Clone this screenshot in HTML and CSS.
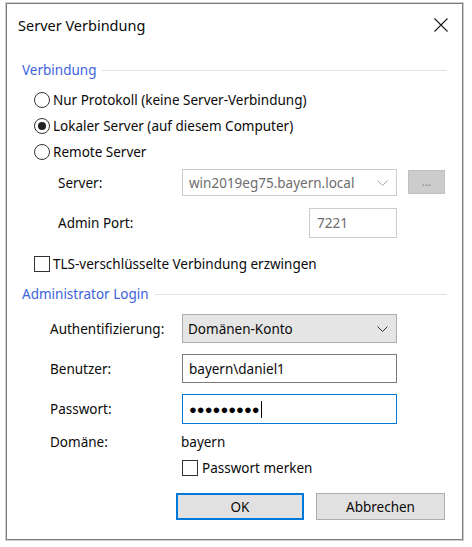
FILE: index.html
```html
<!DOCTYPE html>
<html lang="de">
<head>
<meta charset="utf-8">
<title>Server Verbindung</title>
<link rel="stylesheet" href="styles.css">
</head>
<body>
<div class="window">
  <div class="titlebar">
    <span class="title">Server Verbindung</span>
    <svg class="close" width="14" height="14" viewBox="0 0 14 14"><path d="M0.5 0.5 L13.5 13.5 M13.5 0.5 L0.5 13.5" stroke="#1a1a1a" stroke-width="1.1" fill="none"/></svg>
  </div>

  <div class="group-hdr hdr1"><span>Verbindung</span><span class="line"></span></div>

  <div class="radio-row r1"><span class="radio"></span><span>Nur Protokoll (keine Server-Verbindung)</span></div>
  <div class="radio-row"><span class="radio checked"></span><span>Lokaler Server (auf diesem Computer)</span></div>
  <div class="radio-row"><span class="radio"></span><span>Remote Server</span></div>

  <div class="field-row server-row">
    <span class="label wide">Server:</span>
    <div class="combo disabled"><span>win2019eg75.bayern.local</span><svg class="chev" width="11" height="6" viewBox="0 0 11 6"><path d="M0.5 0.5 L5.5 5.5 L10.5 0.5" stroke="#a8a8a8" stroke-width="1" fill="none"/></svg></div>
    <div class="dots-btn">...</div>
  </div>

  <div class="field-row port-row">
    <span class="label wide">Admin Port:</span>
    <div class="port-box">7221</div>
  </div>

  <div class="check-row tls-row"><span class="checkbox"></span><span>TLS-verschlüsselte Verbindung erzwingen</span></div>

  <div class="group-hdr hdr2"><span>Administrator Login</span><span class="line"></span></div>

  <div class="field-row auth-row">
    <span class="label">Authentifizierung:</span>
    <div class="combo active"><span>Domänen-Konto</span><svg class="chev" width="11" height="6" viewBox="0 0 11 6"><path d="M0.5 0.5 L5.5 5.5 L10.5 0.5" stroke="#333" stroke-width="1" fill="none"/></svg></div>
  </div>

  <div class="field-row user-row">
    <span class="label">Benutzer:</span>
    <div class="textbox">bayern\daniel1</div>
  </div>

  <div class="field-row pw-row">
    <span class="label">Passwort:</span>
    <div class="textbox focused"><span class="pw">●●●●●●●●●</span><span class="caret"></span></div>
  </div>

  <div class="field-row dom-row">
    <span class="label">Domäne:</span>
    <span class="value">bayern</span>
  </div>

  <div class="check-row merken-row"><span class="checkbox"></span><span>Passwort merken</span></div>

  <div class="buttons">
    <div class="btn default">OK</div>
    <div class="btn">Abbrechen</div>
  </div>
</div>
</body>
</html>
```

FILE: styles.css
```css
* { box-sizing: border-box; }
html, body { margin: 0; padding: 0; background: #fff; }
body {
  font-family: "Noto Sans", "Open Sans", sans-serif;
  font-size: 13.5px;
  color: #0a0a0a;
  width: 472px;
  height: 547px;
  overflow: hidden;
}
.window {
  margin: 3px 0 0 6px;
  width: 457px;
  height: 537px;
  border: 1px solid #7c7c7c;
  box-shadow: 0 0 0 1px #cfcfcf;
  background: #fff;
  display: flex;
  flex-direction: column;
}
.titlebar {
  height: 42px;
  display: flex;
  align-items: center;
  justify-content: space-between;
  padding: 0 14px 0 11px;
  flex: none;
}
.title { font-size: 14.5px; }
.close { display: block; }

.group-hdr {
  display: flex;
  align-items: center;
  height: 20px;
  margin: 0 15px 0 15px;
  color: #3d62dc;
  flex: none;
}
.group-hdr .line { flex: 1; height: 1px; background: #dde3ea; margin-left: 6px; }
.hdr1 { margin-top: 14px; }
.hdr2 { margin-top: 10px; }

.radio-row, .check-row {
  display: flex;
  align-items: center;
  height: 26px;
  padding-left: 27px;
  gap: 3px;
  flex: none;
}
.r1 { margin-top: 7px; }
.radio {
  width: 16px; height: 16px;
  border: 1px solid #333;
  border-radius: 50%;
  background: #fff;
  display: flex; align-items: center; justify-content: center;
}
.radio.checked::after {
  content: "";
  width: 8px; height: 8px;
  border-radius: 50%;
  background: #222;
}
.checkbox {
  width: 16px; height: 16px;
  border: 1px solid #333;
  background: #fff;
  flex: none;
}

.field-row {
  display: flex;
  align-items: center;
  padding-left: 43px;
  flex: none;
}
.label { width: 132px; flex: none; }
.label.wide { padding-left: 8px; }

.server-row { margin-top: 4px; height: 27px; }
.combo {
  width: 215px;
  height: 100%;
  display: flex;
  align-items: center;
  justify-content: space-between;
  padding: 0 8px 0 6px;
  border: 1px solid #cccccc;
}
.combo.disabled { color: #6d6d6d; background: #fff; }
.combo.active { background: #e5e5e5; border-color: #adadad; color: #0a0a0a; padding-left: 5px; }
.dots-btn {
  margin-left: 11px;
  width: 37px; height: 24px;
  background: #cccccc;
  border: 1px solid #bfbfbf;
  color: #8a8a8a;
  display: flex; align-items: center; justify-content: center;
  font-size: 12px;
  padding-bottom: 2px;
  align-self: flex-start;
  margin-top: 1px;
}
.port-row { margin-top: 12px; height: 30px; }
.port-box {
  margin-left: 127px;
  width: 88px; height: 100%;
  border: 1px solid #cccccc;
  color: #6d6d6d;
  display: flex; align-items: center;
  padding-left: 7px;
}
.tls-row { margin-top: 16px; height: 20px; }

.auth-row { margin-top: 10px; height: 29px; }
.textbox {
  width: 215px; height: 100%;
  border: 1px solid #7a7a7a;
  display: flex; align-items: center;
  padding-left: 6px;
  background: #fff;
}
.textbox.focused { border-color: #0078d7; }
.pw { font-size: 13px; letter-spacing: 0; color: #000; }
.caret { width: 1px; height: 17px; background: #000; margin-left: 1px; }
.user-row { margin-top: 11px; height: 29px; }
.pw-row { margin-top: 11px; height: 30px; }
.dom-row { margin-top: 8px; height: 20px; }
.value { margin-left: -1px; }

.merken-row { margin-top: 6px; height: 20px; padding-left: 175px; gap: 4px; }

.buttons {
  margin-top: 15px;
  display: flex;
  gap: 12px;
  padding-left: 169px;
  flex: none;
}
.btn {
  width: 129px; height: 27px;
  background: #e1e1e1;
  border: 1px solid #adadad;
  display: flex; align-items: center; justify-content: center;
}
.btn.default { width: 128px; border: 2px solid #0078d7; }
```
